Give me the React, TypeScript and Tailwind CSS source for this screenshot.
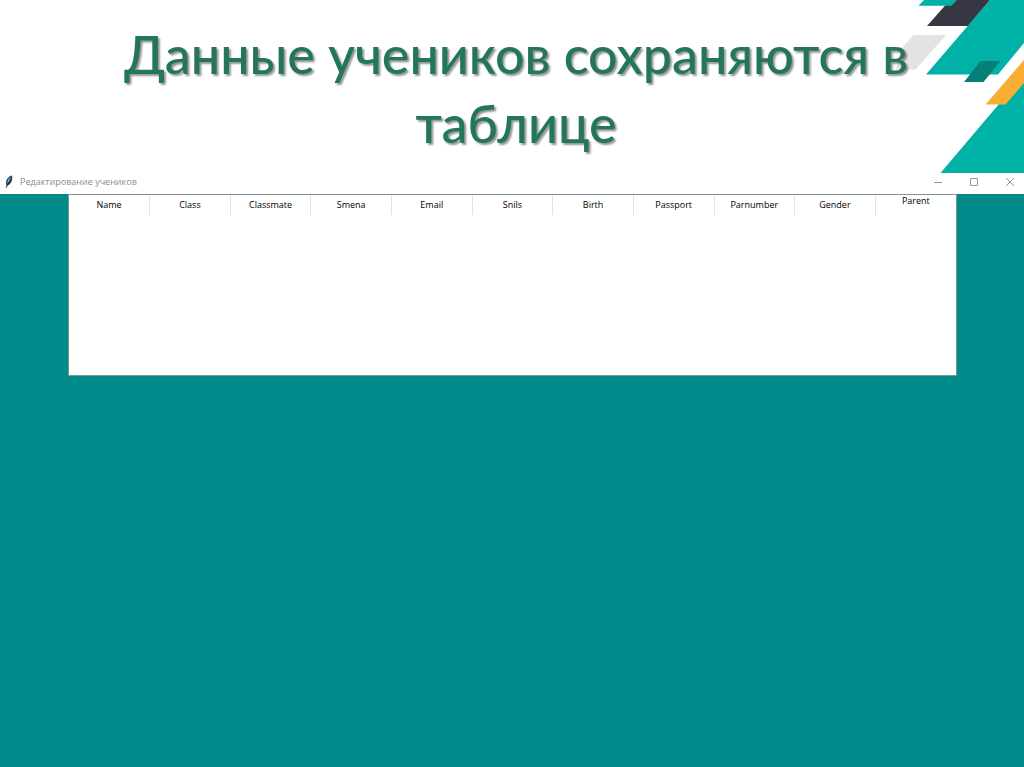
const columns = [
  "Name",
  "Class",
  "Classmate",
  "Smena",
  "Email",
  "Snils",
  "Birth",
  "Passport",
  "Parnumber",
  "Gender",
  "Parent",
];

function CornerArt() {
  return (
    <svg
      aria-hidden="true"
      className="absolute right-0 top-0"
      width="144"
      height="173"
      viewBox="880 0 144 173"
    >
      <path d="M913.5 35H946L915.5 69.5H896L903 47Z" fill="#e4e2e2" />
      <path d="M927 26L950 0H990L968 26Z" fill="#373643" />
      <path d="M918.5 5.7L924 0H957L951.5 5.7Z" fill="#00b1a5" />
      <path d="M926 74.5L990 0H1024V43L998 74.5Z" fill="#00b1a5" />
      <path d="M940.5 173L999 104L1024 80V173Z" fill="#00b1a5" />
      <path d="M964 82L980.5 61H1000.5L983.5 82Z" fill="#067f77" />
      <path d="M985.5 104.5L1024 60V83L1005.5 104.5Z" fill="#f9ae33" />
    </svg>
  );
}

function FeatherIcon() {
  return (
    <svg aria-hidden="true" width="10" height="14" viewBox="0 0 10 14">
      <path d="M8 0.5C5 1 2 4 2 8L2.5 11L5.5 9.5C8 7 9 3 8 0.5Z" fill="#23476b" />
      <path d="M6.5 2C4.5 4 3.4 6 3.4 8.6L5.6 6Z" fill="#9ccbe6" />
      <path d="M6.5 4L2 13" stroke="#111827" strokeWidth="0.8" />
    </svg>
  );
}

export default function App() {
  return (
    <div className="min-h-screen bg-[#008a89] font-['Open_Sans','Noto_Sans',sans-serif]">
      {/* Slide heading */}
      <header className="relative bg-white pb-4 pl-[88px] pr-20 pt-5">
        <CornerArt />
        <h1 className="relative text-center font-['Lato',sans-serif] text-[52px] font-medium leading-[69px] text-[#24765a] [text-shadow:2px_2px_2px_#0000006b]">
          Данные учеников сохраняются в таблице
        </h1>
      </header>

      {/* Window title bar */}
      <div className="flex h-5 items-start justify-between bg-white pl-1">
        <div className="flex items-center gap-1.5">
          <FeatherIcon />
          <span className="text-[9px] leading-4 text-[#8c8c8c]">
            Редактирование учеников
          </span>
        </div>
        <div className="-mr-1 flex h-4 items-center text-[#999999]">
          <button type="button" aria-label="Minimize" className="flex w-9 justify-center">
            <svg width="10" height="10" viewBox="0 0 10 10">
              <path d="M1 5.5H9" stroke="currentColor" />
            </svg>
          </button>
          <button type="button" aria-label="Maximize" className="flex w-9 justify-center">
            <svg width="10" height="10" viewBox="0 0 10 10" fill="none">
              <path d="M1.5 1.5H8.5V8.5H1.5Z" stroke="currentColor" />
            </svg>
          </button>
          <button type="button" aria-label="Close" className="flex w-9 justify-center">
            <svg width="10" height="10" viewBox="0 0 10 10">
              <path d="M1 1L9 9M9 1L1 9" stroke="currentColor" />
            </svg>
          </button>
        </div>
      </div>

      {/* Students table */}
      <main className="pl-[68px] pr-[67px]">
        <div className="h-[182px] border border-[#7f9393] bg-white">
          <table className="w-full table-fixed border-collapse">
            <thead>
              <tr className="h-5">
                {columns.map((name) => (
                  <th
                    key={name}
                    scope="col"
                    className="border-r border-[#e2e2e2] p-0 text-[9px] font-medium leading-3 text-black last:border-r-0 last:align-top"
                  >
                    {name}
                  </th>
                ))}
              </tr>
            </thead>
          </table>
        </div>
      </main>
    </div>
  );
}
